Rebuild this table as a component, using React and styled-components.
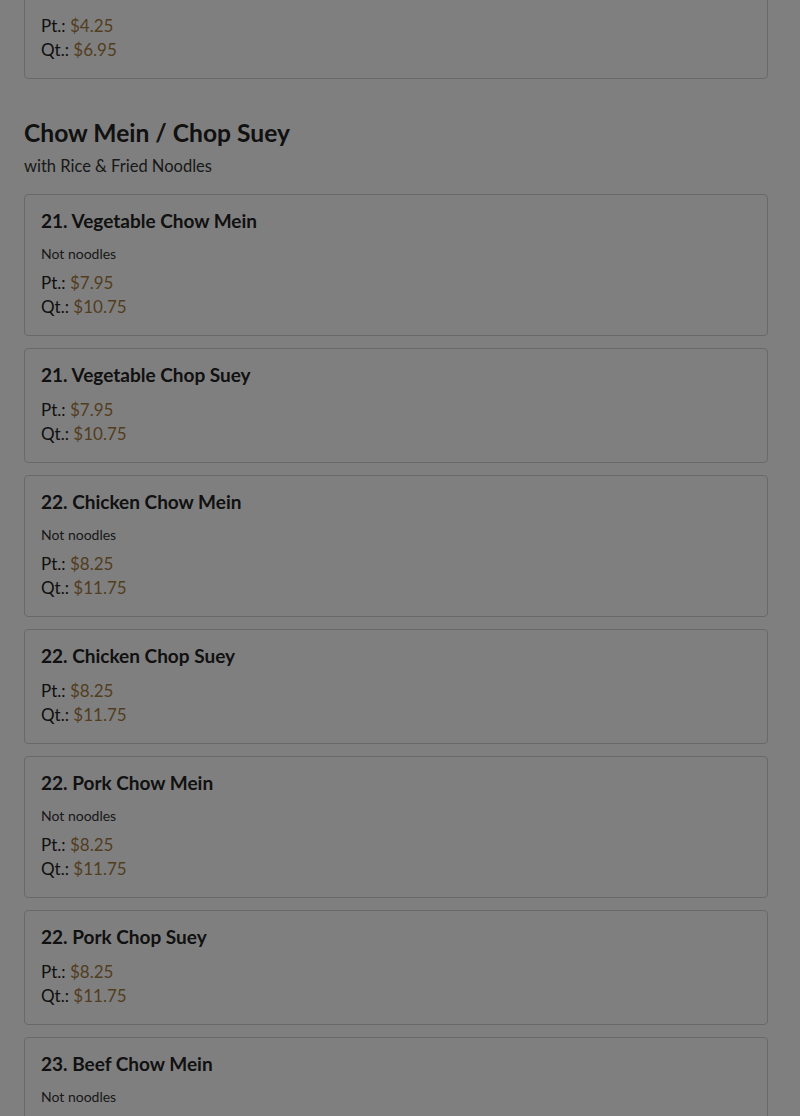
import React from "react";
import styled, { createGlobalStyle } from "styled-components";

const GlobalStyle = createGlobalStyle`
  html, body {
    margin: 0;
    padding: 0;
    background: #ffffff;
    font-family: "Lato", "Noto Sans", sans-serif;
    color: #222222;
  }
  * { box-sizing: border-box; }
`;

const Page = styled.div`
  padding: 0 32px 0 24px;
  margin-top: -3px;
`;

const Section = styled.section`
  margin-bottom: 38px;
`;

const SectionTitle = styled.h2`
  margin: 0 0 5px;
  font-size: 24.6px;
  line-height: 32px;
  font-weight: 700;
  color: #222222;
`;

const SectionSub = styled.p`
  margin: 0 0 16px;
  font-size: 16.5px;
  line-height: 24px;
  color: #333333;
`;

const List = styled.div`
  display: flex;
  flex-direction: column;
  gap: 12px;
`;

const Card = styled.div`
  border: 1px solid #d2d2d2;
  border-radius: 4px;
  padding: 16px;
  background: #ffffff;
`;

const ItemName = styled.h3`
  margin: 0 0 13px;
  font-size: 19px;
  line-height: 20px;
  font-weight: 700;
  color: #222222;
`;

const Note = styled.div`
  margin: 0 0 8px;
  font-size: 14px;
  line-height: 19px;
  color: #333333;
`;

const Price = styled.div`
  font-size: 17px;
  line-height: 24px;
  color: #222222;
  span {
    color: #a57b3e;
  }
`;

const Overlay = styled.div`
  position: fixed;
  inset: 0;
  background: rgba(0, 0, 0, 0.5);
`;

const items = [
  { name: "21. Vegetable Chow Mein", note: "Not noodles", pt: "$7.95", qt: "$10.75" },
  { name: "21. Vegetable Chop Suey", pt: "$7.95", qt: "$10.75" },
  { name: "22. Chicken Chow Mein", note: "Not noodles", pt: "$8.25", qt: "$11.75" },
  { name: "22. Chicken Chop Suey", pt: "$8.25", qt: "$11.75" },
  { name: "22. Pork Chow Mein", note: "Not noodles", pt: "$8.25", qt: "$11.75" },
  { name: "22. Pork Chop Suey", pt: "$8.25", qt: "$11.75" },
  { name: "23. Beef Chow Mein", note: "Not noodles", pt: "$8.75", qt: "$12.25" },
];

const Prices = ({ pt, qt }) => (
  <>
    <Price>Pt.: <span>{pt}</span></Price>
    <Price>Qt.: <span>{qt}</span></Price>
  </>
);

export default function App() {
  return (
    <>
      <GlobalStyle />
      <Page>
        <Section>
          <Card>
            <Prices pt="$4.25" qt="$6.95" />
          </Card>
        </Section>
        <Section>
          <SectionTitle>Chow Mein / Chop Suey</SectionTitle>
          <SectionSub>with Rice &amp; Fried Noodles</SectionSub>
          <List>
            {items.map((it) => (
              <Card key={it.name}>
                <ItemName>{it.name}</ItemName>
                {it.note && <Note>{it.note}</Note>}
                <Prices pt={it.pt} qt={it.qt} />
              </Card>
            ))}
          </List>
        </Section>
      </Page>
      <Overlay />
    </>
  );
}
